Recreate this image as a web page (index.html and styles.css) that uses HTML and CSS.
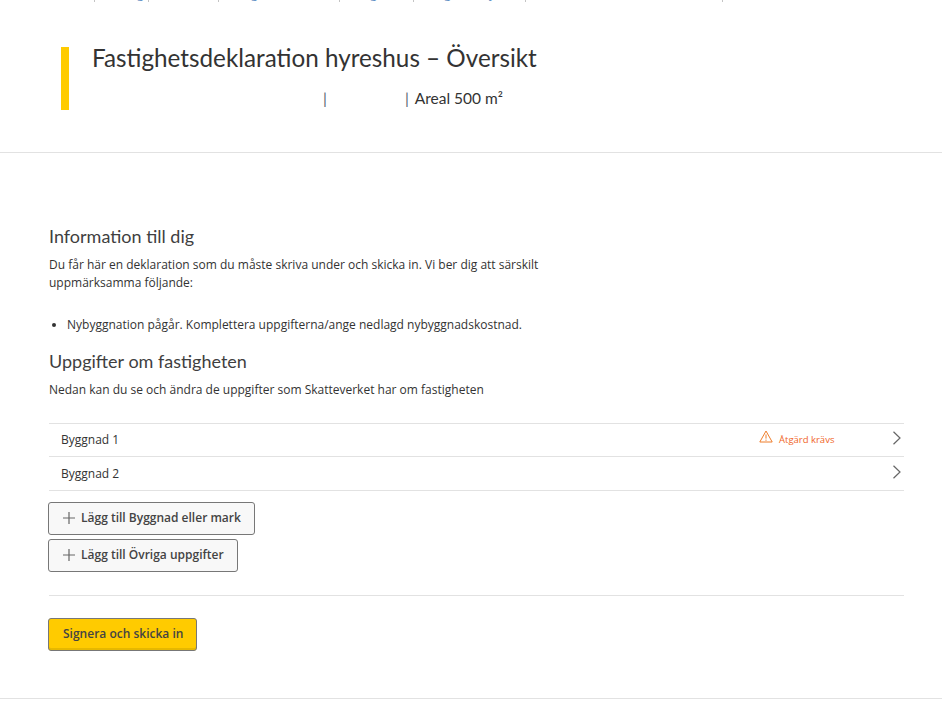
FILE: index.html
```html
<!DOCTYPE html>
<html lang="sv">

<head>
    <meta charset="UTF-8">
    <meta name="viewport" content="width=device-width, initial-scale=1.0">
    <title>Fastighetsdeklaration hyreshus</title>
    <link rel="stylesheet" href="styles.css">
</head>

<body>

    <!-- Breadcrumb, only the bottom of it shows at this scroll position -->
    <div class="crumbs">
        <div class="crumbs-inner">
            <span class="crumb crumb-1">Företag</span>
            <span class="crumb crumb-2">Översikt</span>
            <span class="crumb crumb-3">Fastighetsdeklaration</span>
            <span class="crumb crumb-4">Belägenhet</span>
            <span class="crumb crumb-5">Belägenhetsyta</span>
            <span class="crumb crumb-6">Dokument</span>
        </div>
    </div>

    <header class="page-head">
        <div class="title-block">
            <h1>Fastighetsdeklaration hyreshus – Översikt</h1>
            <p class="meta"><span class="sep sep-first">|</span><span class="sep sep-second">|</span>Areal 500 m²</p>
        </div>
    </header>

    <main class="content">
        <h2>Information till dig</h2>
        <p class="lead">Du får här en deklaration som du måste skriva under och skicka in. Vi ber dig att särskilt uppmärksamma följande:</p>
        <ul class="notes">
            <li>Nybyggnation pågår. Komplettera uppgifterna/ange nedlagd nybyggnadskostnad.</li>
        </ul>

        <h2>Uppgifter om fastigheten</h2>
        <p class="intro">Nedan kan du se och ändra de uppgifter som Skatteverket har om fastigheten</p>

        <div class="rows">
            <a class="row row-first">
                <span class="row-name">Byggnad 1</span>
                <span class="row-status">
                    <svg class="warn-icon" width="14" height="13" viewBox="0 0 14 13" fill="none" stroke="#ee7d2b" stroke-width="1">
                        <path d="M7 1 L13.2 12 H0.8 Z" stroke-linejoin="round" />
                        <path d="M7 4.5 V8.6 M7 9.6 V10.8" />
                    </svg>
                    Åtgärd krävs
                </span>
                <svg class="chevron" width="10" height="14" viewBox="0 0 10 14" fill="none" stroke="#666" stroke-width="1.2">
                    <path d="M1.5 0.8 L8 7 L1.5 13.2" />
                </svg>
            </a>
            <a class="row">
                <span class="row-name">Byggnad 2</span>
                <svg class="chevron" width="10" height="14" viewBox="0 0 10 14" fill="none" stroke="#666" stroke-width="1.2">
                    <path d="M1.5 0.8 L8 7 L1.5 13.2" />
                </svg>
            </a>
        </div>

        <div class="add-buttons">
            <button class="btn-add">
                <svg width="12" height="12" viewBox="0 0 12 12" stroke="#666" stroke-width="1.2"><path d="M6 0 V12 M0 6 H12" /></svg>
                Lägg till Byggnad eller mark
            </button>
            <button class="btn-add">
                <svg width="12" height="12" viewBox="0 0 12 12" stroke="#666" stroke-width="1.2"><path d="M6 0 V12 M0 6 H12" /></svg>
                Lägg till Övriga uppgifter
            </button>
        </div>

        <div class="submit-area">
            <button class="btn-submit">Signera och skicka in</button>
        </div>
    </main>

    <footer class="page-foot"></footer>

</body>

</html>
```

FILE: styles.css
```css
body {
    margin: 0;
    padding: 0;
    height: 717px;
    overflow: hidden;
    background-color: #fff;
    color: #333;
    font-family: "Open Sans", Arial, sans-serif;
    font-size: 12px;
}

.crumbs {
    height: 2px;
    overflow: hidden;
    padding-left: 94px;
}

.crumbs-inner {
    display: flex;
    margin-top: -15px;
    color: #5f8fc4;
    font-size: 12px;
    line-height: 17px;
}

.crumb {
    box-sizing: border-box;
    padding-left: 6px;
    border-left: 1px solid #c4c4c4;
    white-space: nowrap;
    overflow: hidden;
}

.crumb-1 { width: 54px; }
.crumb-2 { width: 70px; }
.crumb-3 { width: 121px; }
.crumb-4 { width: 74px; }
.crumb-5 { width: 112px; }
.crumb-6 { width: 198px; border-right: 1px solid #c4c4c4; }

.page-head {
    height: 105px;
    padding: 45px 0 0 61px;
    border-bottom: 1px solid #e2e2e2;
}

.title-block {
    height: 63px;
    padding-left: 23px;
    border-left: 8px solid #ffcb00;
}

h1 {
    margin: 0;
    font-family: Lato, Arial, sans-serif;
    font-size: 24.25px;
    font-weight: 400;
    line-height: 22px;
    color: #333;
    font-variant-ligatures: common-ligatures;
}

.meta {
    margin: 20px 0 0;
    font-family: Lato, Arial, sans-serif;
    font-size: 15.5px;
    line-height: 18px;
    color: #333;
}

.sep {
    color: #5b6670;
}

.sep-first {
    margin-left: 231px;
}

.sep-second {
    margin-left: 78px;
    margin-right: 6px;
}

.content {
    padding: 71px 38px 0 49px;
}

h2 {
    margin: 0;
    font-family: Lato, Arial, sans-serif;
    font-size: 18px;
    font-weight: 400;
    line-height: 24px;
    color: #3f3f3f;
    font-variant-ligatures: common-ligatures;
}

.lead {
    width: 500px;
    margin: 8px 0 0;
    line-height: 18px;
}

.notes {
    margin: 24px 0 0;
    padding-left: 18px;
    line-height: 18px;
}

.notes + h2 {
    margin-top: 15px;
}

.intro {
    margin: 8px 0 0;
    line-height: 18px;
}

.rows {
    margin-top: 24px;
    border-top: 1px solid #e2e2e2;
}

.row {
    display: flex;
    align-items: center;
    height: 33px;
    padding: 0 2px 0 12px;
    border-bottom: 1px solid #e2e2e2;
}

.row-first {
    height: 30px;
    padding-bottom: 2px;
}

.row-name {
    flex: 1;
}

.row-status {
    display: flex;
    align-items: center;
    gap: 6px;
    width: 133px;
    color: #f0651f;
    font-size: 9.5px;
}

.warn-icon {
    margin-bottom: 6px;
}

.chevron {
    flex: none;
    margin-bottom: 4px;
}

.row-first .chevron {
    margin-bottom: 2px;
}

.add-buttons {
    margin-top: 11px;
    margin-left: -1px;
    display: flex;
    flex-direction: column;
    align-items: flex-start;
    gap: 4px;
}

.btn-add {
    display: flex;
    align-items: center;
    gap: 6px;
    height: 33px;
    padding: 0 13px 2px 14px;
    border: 1px solid #777;
    border-radius: 3px;
    background-color: #f8f8f8;
    color: #444;
    font-family: "Open Sans", Arial, sans-serif;
    font-size: 12px;
    font-weight: 600;
}

.submit-area {
    margin-top: 23px;
    padding-top: 22px;
    border-top: 1px solid #e2e2e2;
}

.btn-submit {
    display: block;
    margin-left: -1px;
    height: 33px;
    padding: 0 13px 2px 14px;
    border: 1px solid #777;
    border-radius: 3px;
    background-color: #ffcb00;
    box-shadow: inset 0 -2px 0 #e6b800;
    color: #444;
    font-family: "Open Sans", Arial, sans-serif;
    font-size: 12px;
    font-weight: 600;
}

.page-foot {
    margin-top: 47px;
    border-top: 1px solid #e2e2e2;
}
```
